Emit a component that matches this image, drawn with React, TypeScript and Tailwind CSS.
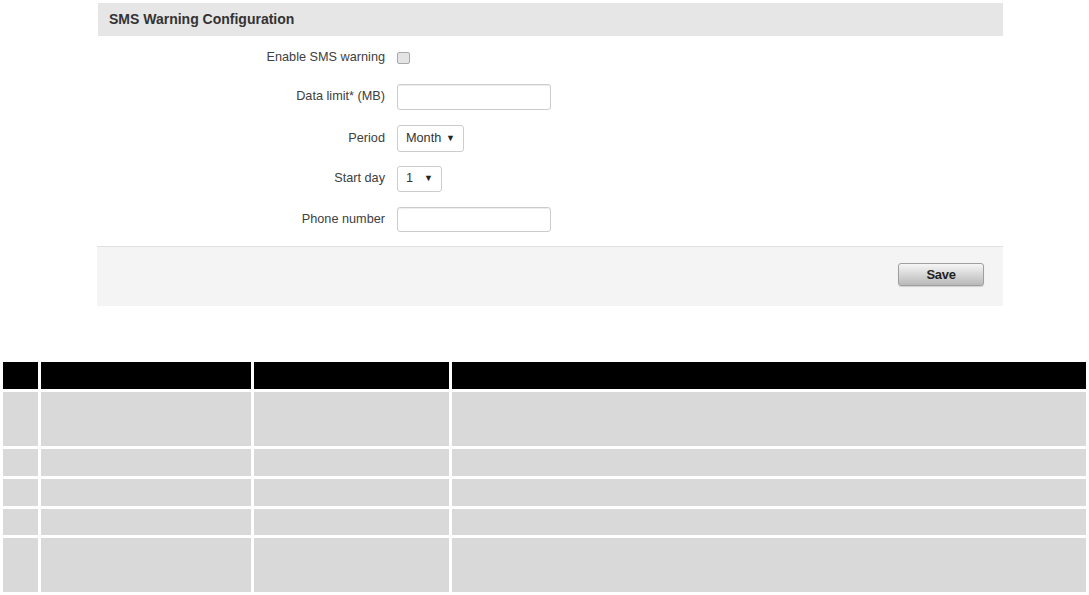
import React from 'react';

const font = { fontFamily: '"Liberation Sans", Arial, sans-serif' };

const FormRow: React.FC<{ label: string; className: string; children: React.ReactNode }> = ({ label, className, children }) => (
    <div className={`flex items-center ${className}`}>
        <div className="w-[287px] text-right text-[12.7px] text-[#404040]">{label}</div>
        <div className="pl-[12px] flex items-center">{children}</div>
    </div>
);

const FakeSelect: React.FC<{ value: string; width: string; height: string }> = ({ value, width, height }) => (
    <div className={`${width} ${height} flex items-center justify-between pl-[8px] pr-[8px] bg-white border border-[#cccccc] rounded-[3px] text-[12.7px] text-[#333]`}>
        <span>{value}</span>
        <span className="text-[9px] text-[#222]">▼</span>
    </div>
);

const rows = [54, 27, 27, 26, 54];

const App: React.FC = () => {
    return (
        <div className="w-[1089px] bg-white" style={font}>
            <div className="ml-[98px] w-[905px] pt-[3px]">
                <div className="h-[33px] bg-[#e6e6e6] flex items-center pl-[11px] text-[14px] font-bold text-[#333]">
                    SMS Warning Configuration
                </div>

                <FormRow label="Enable SMS warning" className="mt-[15px] h-[14px]">
                    <div className="w-[13px] h-[12px] rounded-[2px] border border-[#a9a9a9] bg-[#e4e4e4]" />
                </FormRow>
                <FormRow label="Data limit* (MB)" className="mt-[19px] h-[26px]">
                    <div className="w-[154px] h-[26px] bg-white border border-[#cccccc] rounded-[3px] shadow-[inset_0_1px_1px_rgba(0,0,0,0.075)]" />
                </FormRow>
                <FormRow label="Period" className="mt-[15px] h-[27px]">
                    <FakeSelect value="Month" width="w-[67px]" height="h-[27px]" />
                </FormRow>
                <FormRow label="Start day" className="mt-[14px] h-[26px]">
                    <FakeSelect value="1" width="w-[45px]" height="h-[26px]" />
                </FormRow>
                <FormRow label="Phone number" className="mt-[15px] h-[25px]">
                    <div className="w-[154px] h-[25px] bg-white border border-[#cccccc] rounded-[3px] shadow-[inset_0_1px_1px_rgba(0,0,0,0.075)]" />
                </FormRow>

                <div className="mt-[14px] ml-[-1px] w-[906px] h-[60px] bg-[#f4f4f4] border-t border-[#e0e0e0] flex justify-end items-start pt-[16px] pr-[19px]">
                    <button className="w-[86px] h-[23px] rounded-[3px] border border-[#9f9f9f] bg-gradient-to-b from-[#f6f6f6] to-[#b9b9b9] text-[13px] font-bold text-[#222] tracking-[-0.3px] shadow-[0_1px_1px_rgba(0,0,0,0.15)]">
                        Save
                    </button>
                </div>
            </div>

            <table className="mt-[53px] w-[1089px] border-separate border-spacing-[3px]">
                <thead>
                    <tr className="h-[27px]">
                        <th className="w-[35px] bg-black p-0" />
                        <th className="w-[210px] bg-black p-0" />
                        <th className="w-[195px] bg-black p-0" />
                        <th className="bg-black p-0" />
                    </tr>
                </thead>
                <tbody>
                    {rows.map((h, i) => (
                        <tr key={i} style={{ height: h }}>
                            <td className="bg-[#d9d9d9] p-0" />
                            <td className="bg-[#d9d9d9] p-0" />
                            <td className="bg-[#d9d9d9] p-0" />
                            <td className="bg-[#d9d9d9] p-0" />
                        </tr>
                    ))}
                </tbody>
            </table>
        </div>
    );
};

export default App;
